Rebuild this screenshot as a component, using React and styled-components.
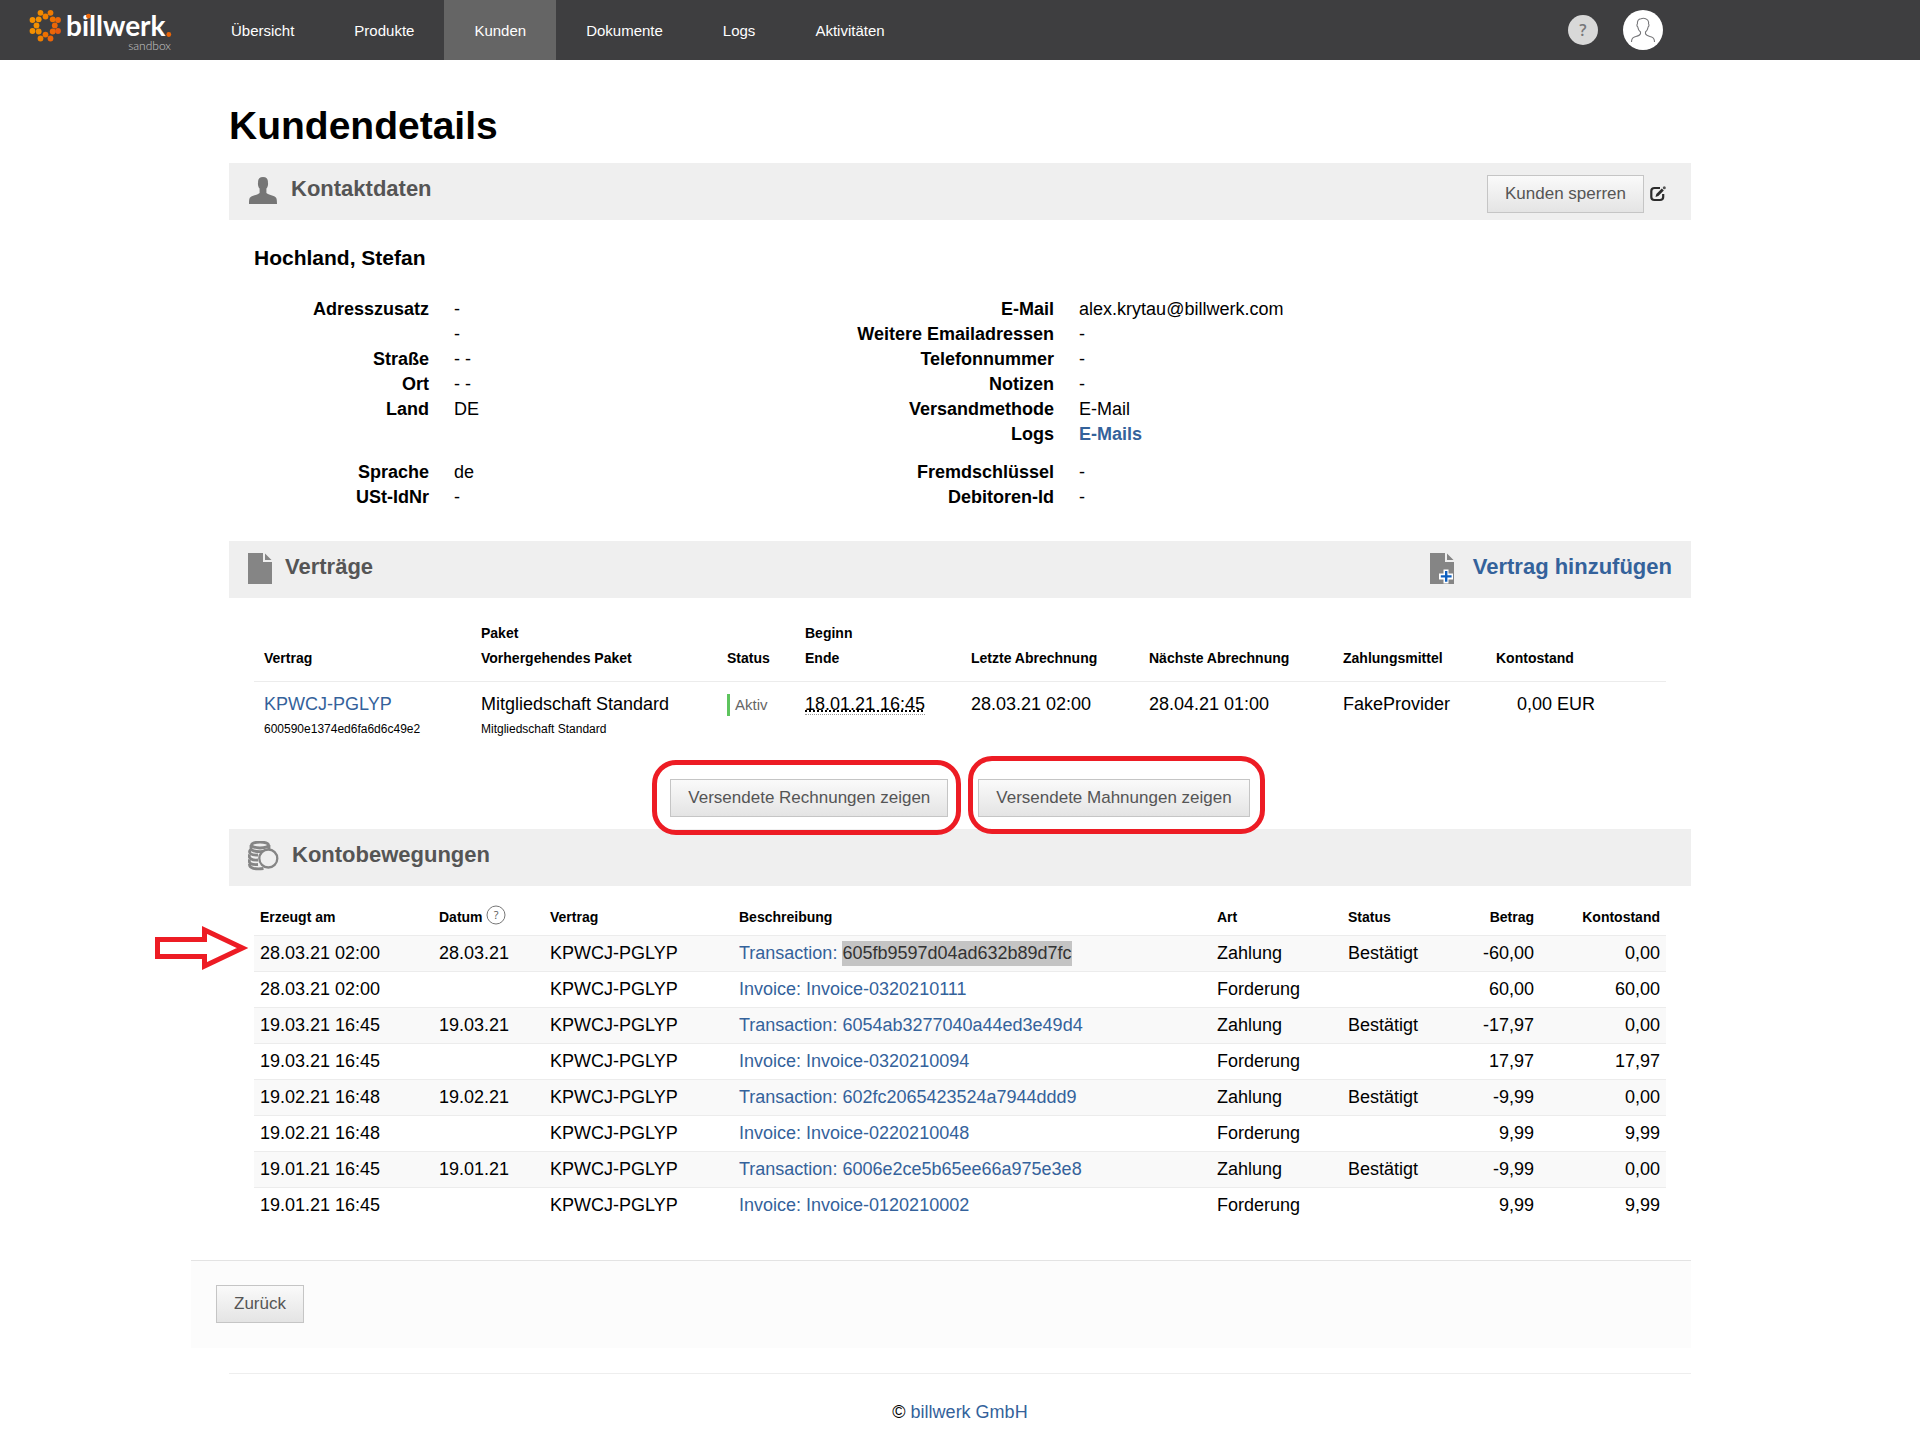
import React from "react";
import styled, { createGlobalStyle, css } from "styled-components";

const GlobalStyle = createGlobalStyle`
  *, *::before, *::after { box-sizing: border-box; }
  body {
    margin: 0;
    background: #fff;
    color: #000;
    font-family: "Liberation Sans", Arial, sans-serif;
    font-size: 18px;
    line-height: 25px;
  }
`;

/* ---------- header ---------- */

const Header = styled.header`
  display: flex;
  align-items: center;
  height: 60px;
  padding-right: 257px;
  background: #3e3e40;
`;

const Brand = styled.a`
  flex: none;
  display: block;
  width: 201px;
  height: 60px;
`;

const Nav = styled.nav`
  display: flex;
  flex: 1;
`;

const NavLink = styled.a`
  padding: 1px 30px 0;
  font-size: 15px;
  line-height: 59px;
  color: #fff;
  text-decoration: none;
  background: ${(p) => (p.$active ? "#656565" : "transparent")};
`;

const HeaderActions = styled.div`
  display: flex;
  align-items: center;
  gap: 25px;
`;

const RoundButton = styled.button`
  display: flex;
  align-items: center;
  justify-content: center;
  width: ${(p) => p.$size}px;
  height: ${(p) => p.$size}px;
  padding: 0;
  border: 0;
  border-radius: 50%;
  background: ${(p) => p.$fill};
  color: #77777a;
  font: 600 16px "Open Sans", sans-serif;
`;

/* ---------- page ---------- */

const Page = styled.main`
  max-width: 1462px;
  margin: 0 auto;
`;

const Title = styled.h1`
  margin: 0;
  padding: 41px 0 12px;
  font-size: 39px;
  line-height: 50px;
`;

const SectionBar = styled.div`
  display: flex;
  align-items: center;
  height: 57px;
  padding: 0 19px;
  gap: 13px;
  background: #efefef;

  > svg, a svg { flex: none; margin-bottom: 2px; }
`;

const SectionTitle = styled.h2`
  flex: 1;
  margin: 0;
  padding-bottom: 6px;
  font-size: 22px;
  line-height: 25px;
  color: #555;
`;

const BarTools = styled.div`
  display: flex;
  align-items: center;
  gap: 6px;
  padding: 5px 6px 0 0;
`;

const IconButton = styled.button`
  display: flex;
  padding: 0;
  border: 0;
  background: none;
`;

const Button = styled.button`
  height: 38px;
  padding: 0 17px 2px;
  border: 1px solid #c5c5c5;
  background: linear-gradient(#fafafa, #e4e4e4);
  color: #555;
  font: inherit;
  font-size: 17px;
`;

const Link = styled.a`
  color: #34629b;
  text-decoration: none;
  font-weight: ${(p) => (p.$bold ? "bold" : "normal")};
`;

const AddLink = styled(Link)`
  display: flex;
  align-items: center;
  gap: 19px;
  font-size: 22px;
  font-weight: bold;

  span { padding-bottom: 6px; }
`;

/* ---------- contact ---------- */

const Contact = styled.section`
  padding: 25px 25px 31px;
`;

const CustomerName = styled.h3`
  margin: 0 0 27px;
  font-size: 21px;
  line-height: 25px;
`;

const ContactGrid = styled.div`
  display: grid;
  grid-template-columns: 17fr 23fr;
  row-gap: 13px;
`;

const Details = styled.dl`
  display: grid;
  grid-template-columns: ${(p) => p.$label}px 1fr;
  align-content: start;
  column-gap: 25px;
  margin: 0;

  dt { font-weight: bold; text-align: right; }
  dd { margin: 0; }
`;

/* ---------- tables ---------- */

const Table = styled.table`
  width: 100%;
  table-layout: fixed;
  border-collapse: separate;
  border-spacing: 0;

  th { font-size: 14px; text-align: left; white-space: nowrap; }
  td { white-space: nowrap; }
`;

const Col = styled.col`
  width: ${(p) => p.$w / 14.12}%;
`;

const rightAligned = css`
  text-align: right !important;
`;

const ContractSection = styled.section`
  padding: 15px 25px 0;
`;

const ContractTable = styled(Table)`
  th { padding: 8px 10px 10px; vertical-align: bottom; border-bottom: 1px solid #ececec; }
  td { padding: 10px 10px 10px; vertical-align: top; }
`;

const Small = styled.div`
  font-size: 12px;
`;

const Status = styled.span`
  display: inline-block;
  padding-left: 5px;
  border-left: 3px solid #5ec45e;
  font-size: 15px;
  line-height: 22px;
  color: #666;
`;

const Stamp = styled.abbr`
  border-bottom: 1px dotted #999;
  text-decoration: underline dotted;
`;

const NumCell = styled.td`
  ${rightAligned}
`;

const NumHead = styled.th`
  ${rightAligned}
`;

const ButtonRow = styled.div`
  display: flex;
  justify-content: center;
  gap: 30px;
  padding: 27px 0 12px;
`;

const Marked = styled.div`
  position: relative;
`;

const Ring = styled.span`
  position: absolute;
  inset: ${(p) => p.$inset};
  border: 5px solid #ed1c24;
  border-radius: 24px;
  pointer-events: none;
`;

const LedgerSection = styled.section`
  position: relative;
  padding: 13px 25px 0;
`;

const LedgerTable = styled(Table)`
  th { padding: 6px 6px 5px; }
  td { padding: 5px 6px; border-top: 1px solid #ececec; }
  tbody tr:nth-child(odd) { background: #f9f9f9; }
`;

const HeadWithHelp = styled.span`
  display: flex;
  align-items: center;
  gap: 3px;

  svg { margin-bottom: 5px; }
`;

const Selected = styled.span`
  display: inline-block;
  background: #c4c4c4;
  color: #333;
`;

const Pointer = styled.svg`
  position: absolute;
  left: -75px;
  top: 39px;
`;

/* ---------- bottom ---------- */

const ActionBar = styled.div`
  margin: 37px 0 25px -38px;
  padding: 24px 25px 25px;
  border-top: 1px solid #e3e3e3;
  background: #fcfcfc;

  button { display: block; }
`;

const Footer = styled.footer`
  padding: 26px 0 12px;
  border-top: 1px solid #eee;
  text-align: center;
`;

/* ---------- drawings ---------- */

const dots = [
  [40.5, 12.8, "#f08a00"], [50.5, 12.8, "#f07a00"],
  [32.5, 20, "#f59000"], [45.5, 16.5, "#f08000"], [58, 20, "#ec6608"],
  [38.7, 19.3, "#f59000"], [52.7, 19.3, "#ee7000"],
  [36.5, 25.5, "#f59000"], [54.8, 25.5, "#ec6608"],
  [32.5, 31, "#f59000"], [38.7, 31.5, "#f08a00"], [52.7, 31.5, "#ec6608"], [58, 31, "#e85a10"],
  [45.5, 34.6, "#ee7000"], [40.5, 38.5, "#f08000"], [50.5, 38.5, "#ec6608"],
];

const Logo = () => (
  <svg width="201" height="60" viewBox="0 0 201 60" aria-label="billwerk sandbox">
    {dots.map(([x, y, c], i) => (
      <circle key={i} cx={x} cy={y} r="2.9" fill={c} />
    ))}
    <text x="66" y="36" fontFamily="Lato, sans-serif" fontWeight="700" fontSize="28" fill="#fff">
      billwerk
    </text>
    <circle cx="88.500" cy="16.200" r="2.400" fill="#ec6608" />
    <circle cx="168.800" cy="34.500" r="2.400" fill="#ec6608" />
    <text x="171" y="50" textAnchor="end" fontFamily="Lato, sans-serif" fontWeight="300" fontSize="12" fill="#c9c9c9">
      sandbox
    </text>
  </svg>
);

const UserOutline = () => (
  <svg width="26" height="26" viewBox="0 0 26 26" fill="none" stroke="#77777a" strokeWidth="1.1">
    <path d="M1.5 25c0-3 .6-4.2 3-5 3.200-1 5.500-1.300 6-3.400v-1.600C8.600 13.500 8 11.500 7.700 9.800c-.9-.3-1-2.400-.3-2.900C7.200 4 8.500 2 11 1.700c3-1.200 7 .1 7.500 3 .2.900.1 1.500 0 2.200.7.500.6 2.600-.3 2.900-.3 1.800-.9 3.700-2.700 5.200v1.600c.4 2.100 3 2.400 6 3.400 2.400.8 3 2 3 5" />
  </svg>
);

const PersonIcon = () => (
  <svg width="30" height="28" viewBox="0 0 30 28" fill="#767676">
    <path d="M15 0c3.600 0 5.200 2.200 4.900 5.300.5 2.700-.2 4.800-1.500 6.300v4.300c1.700 1.600 5 2.200 7.800 3.400 2.300 1 2.800 2.700 2.800 7.700H1c0-5 .5-6.700 2.800-7.700 2.800-1.200 6.100-1.800 7.800-3.400v-4.300c-1.300-1.500-2-3.600-1.500-6.300C9.800 2.200 11.400 0 15 0z" />
  </svg>
);

const DocIcon = ({ plus }) => (
  <svg width="24" height="31" viewBox="0 0 24 31">
    <path d="M0 0h15v9h9v22H0z" fill="#858585" />
    <path d="M17 0.500L23.500 7H17z" fill="#858585" />
    {plus && (
      <g>
        <path d="M13.500 16.500h5v4h4.500v6h-4.500v4h-5v-4H9v-6h4.500z" fill="#fff" />
        <path d="M15 18h2.400v4.200h4.200v2.400h-4.200v4.200H15v-4.200h-4.200v-2.400H15z" fill="#0d5fc0" />
      </g>
    )}
  </svg>
);

const CoinsIcon = () => (
  <svg width="31" height="31" viewBox="1 1 31 31" fill="none" stroke="#858585" strokeWidth="2.800">
    <ellipse cx="13" cy="5" rx="8.500" ry="3" />
    <path d="M4 5v3.500c0 4 17.500 4 18 .2V5" />
    <path d="M3.500 9.500C.8 13 4 15.500 11 15" />
    <path d="M2.500 14.500c-1.500 4 3 6 8.500 5.500" />
    <path d="M2.500 19.500c-1.500 4 2.500 5.500 8.500 5" />
    <path d="M2.500 24c-.5 4.500 6 5.500 14 4.500" />
    <circle cx="21.300" cy="18.500" r="9" fill="#efefef" strokeWidth="2.300" />
  </svg>
);

const EditIcon = () => (
  <svg width="16" height="16" viewBox="0 0 16 16" fill="none">
    <path d="M10 2H4.500Q1.300 2 1.300 5v6q0 3 3.200 3h5.500q3.200 0 3.200-3V8" stroke="#2b2b2b" strokeWidth="2.200" />
    <path d="M5.500 11l.8-3 5.500-5.500 2 2L8.300 10z" fill="#2b2b2b" />
    <circle cx="14.300" cy="1.800" r="1.500" fill="#555" />
  </svg>
);

const HelpIcon = () => (
  <svg width="20" height="20" viewBox="0 0 20 20">
    <circle cx="10" cy="10" r="9" fill="none" stroke="#777" />
    <text x="10" y="14" textAnchor="middle" fontFamily="Open Sans, sans-serif" fontSize="11" fontWeight="400" fill="#555">?</text>
  </svg>
);

/* ---------- data ---------- */

const navItems = ["Übersicht", "Produkte", "Kunden", "Dokumente", "Logs", "Aktivitäten"];

const ledger = [
  ["28.03.21 02:00", "28.03.21", "Transaction: ", "605fb9597d04ad632b89d7fc", "Zahlung", "Bestätigt", "-60,00", "0,00"],
  ["28.03.21 02:00", "", "Invoice: ", "Invoice-0320210111", "Forderung", "", "60,00", "60,00"],
  ["19.03.21 16:45", "19.03.21", "Transaction: ", "6054ab3277040a44ed3e49d4", "Zahlung", "Bestätigt", "-17,97", "0,00"],
  ["19.03.21 16:45", "", "Invoice: ", "Invoice-0320210094", "Forderung", "", "17,97", "17,97"],
  ["19.02.21 16:48", "19.02.21", "Transaction: ", "602fc2065423524a7944ddd9", "Zahlung", "Bestätigt", "-9,99", "0,00"],
  ["19.02.21 16:48", "", "Invoice: ", "Invoice-0220210048", "Forderung", "", "9,99", "9,99"],
  ["19.01.21 16:45", "19.01.21", "Transaction: ", "6006e2ce5b65ee66a975e3e8", "Zahlung", "Bestätigt", "-9,99", "0,00"],
  ["19.01.21 16:45", "", "Invoice: ", "Invoice-0120210002", "Forderung", "", "9,99", "9,99"],
];

const DetailList = ({ label, items }) => (
  <Details $label={label}>
    {items.map(([k, v], i) => (
      <React.Fragment key={i}>
        <dt>{k}</dt>
        <dd>{v}</dd>
      </React.Fragment>
    ))}
  </Details>
);

const Cols = ({ widths }) => (
  <colgroup>
    {widths.map((w, i) => (
      <Col key={i} $w={w} />
    ))}
  </colgroup>
);

export default function App() {
  return (
    <>
      <GlobalStyle />
      <Header>
        <Brand href="#"><Logo /></Brand>
        <Nav>
          {navItems.map((n) => (
            <NavLink key={n} href="#" $active={n === "Kunden"}>{n}</NavLink>
          ))}
        </Nav>
        <HeaderActions>
          <RoundButton $size={30} $fill="#d8d8d8" aria-label="Hilfe">?</RoundButton>
          <RoundButton $size={40} $fill="#fff" aria-label="Benutzer"><UserOutline /></RoundButton>
        </HeaderActions>
      </Header>

      <Page>
        <Title>Kundendetails</Title>

        <SectionBar>
          <PersonIcon />
          <SectionTitle>Kontaktdaten</SectionTitle>
          <BarTools>
            <Button>Kunden sperren</Button>
            <IconButton aria-label="Bearbeiten"><EditIcon /></IconButton>
          </BarTools>
        </SectionBar>
        <Contact>
          <CustomerName>Hochland, Stefan</CustomerName>
          <ContactGrid>
            <DetailList label={175} items={[["Adresszusatz", "-"], ["", "-"], ["Straße", "- -"], ["Ort", "- -"], ["Land", "DE"]]} />
            <DetailList
              label={200}
              items={[
                ["E-Mail", "alex.krytau@billwerk.com"],
                ["Weitere Emailadressen", "-"],
                ["Telefonnummer", "-"],
                ["Notizen", "-"],
                ["Versandmethode", "E-Mail"],
                ["Logs", <Link href="#" $bold>E-Mails</Link>],
              ]}
            />
            <DetailList label={175} items={[["Sprache", "de"], ["USt-IdNr", "-"]]} />
            <DetailList label={200} items={[["Fremdschlüssel", "-"], ["Debitoren-Id", "-"]]} />
          </ContactGrid>
        </Contact>

        <SectionBar>
          <DocIcon />
          <SectionTitle>Verträge</SectionTitle>
          <AddLink href="#"><DocIcon plus /><span>Vertrag hinzufügen</span></AddLink>
        </SectionBar>
        <ContractSection>
          <ContractTable>
            <Cols widths={[217, 246, 78, 166, 178, 194, 153, 119, 61]} />
            <thead>
              <tr>
                <th>Vertrag</th>
                <th>Paket<br />Vorhergehendes Paket</th>
                <th>Status</th>
                <th>Beginn<br />Ende</th>
                <th>Letzte Abrechnung</th>
                <th>Nächste Abrechnung</th>
                <th>Zahlungsmittel</th>
                <th>Kontostand</th>
                <th />
              </tr>
            </thead>
            <tbody>
              <tr>
                <td><Link href="#">KPWCJ-PGLYP</Link><Small>600590e1374ed6fa6d6c49e2</Small></td>
                <td>Mitgliedschaft Standard<Small>Mitgliedschaft Standard</Small></td>
                <td><Status>Aktiv</Status></td>
                <td><Stamp>18.01.21 16:45</Stamp></td>
                <td>28.03.21 02:00</td>
                <td>28.04.21 01:00</td>
                <td>FakeProvider</td>
                <NumCell>0,00 EUR</NumCell>
                <td />
              </tr>
            </tbody>
          </ContractTable>
          <ButtonRow>
            <Marked>
              <Button>Versendete Rechnungen zeigen</Button>
              <Ring $inset="-19px -13px -18px -18px" />
            </Marked>
            <Marked>
              <Button>Versendete Mahnungen zeigen</Button>
              <Ring $inset="-23px -15px -17px -10px" />
            </Marked>
          </ButtonRow>
        </ContractSection>

        <SectionBar>
          <CoinsIcon />
          <SectionTitle>Kontobewegungen</SectionTitle>
        </SectionBar>
        <LedgerSection>
          <LedgerTable>
            <Cols widths={[179, 111, 189, 478, 131, 118, 80, 126]} />
            <thead>
              <tr>
                <th>Erzeugt am</th>
                <th><HeadWithHelp>Datum<HelpIcon /></HeadWithHelp></th>
                <th>Vertrag</th>
                <th>Beschreibung</th>
                <th>Art</th>
                <th>Status</th>
                <NumHead>Betrag</NumHead>
                <NumHead>Kontostand</NumHead>
              </tr>
            </thead>
            <tbody>
              {ledger.map(([created, date, kind, id, type, status, amount, balance], i) => (
                <tr key={id}>
                  <td>{created}</td>
                  <td>{date}</td>
                  <td>KPWCJ-PGLYP</td>
                  <td><Link href="#">{kind}{i === 0 ? <Selected>{id}</Selected> : id}</Link></td>
                  <td>{type}</td>
                  <td>{status}</td>
                  <NumCell>{amount}</NumCell>
                  <NumCell>{balance}</NumCell>
                </tr>
              ))}
            </tbody>
          </LedgerTable>
          <Pointer width="96" height="46" viewBox="0 0 96 46" fill="none" stroke="#ed1c24" strokeWidth="5">
            <path d="M3.500 14.500H50.500V5L88.500 23L50.500 41V31.500H3.500z" />
          </Pointer>
        </LedgerSection>

        <ActionBar><Button>Zurück</Button></ActionBar>
        <Footer>© <Link href="#">billwerk GmbH</Link></Footer>
      </Page>
    </>
  );
}
